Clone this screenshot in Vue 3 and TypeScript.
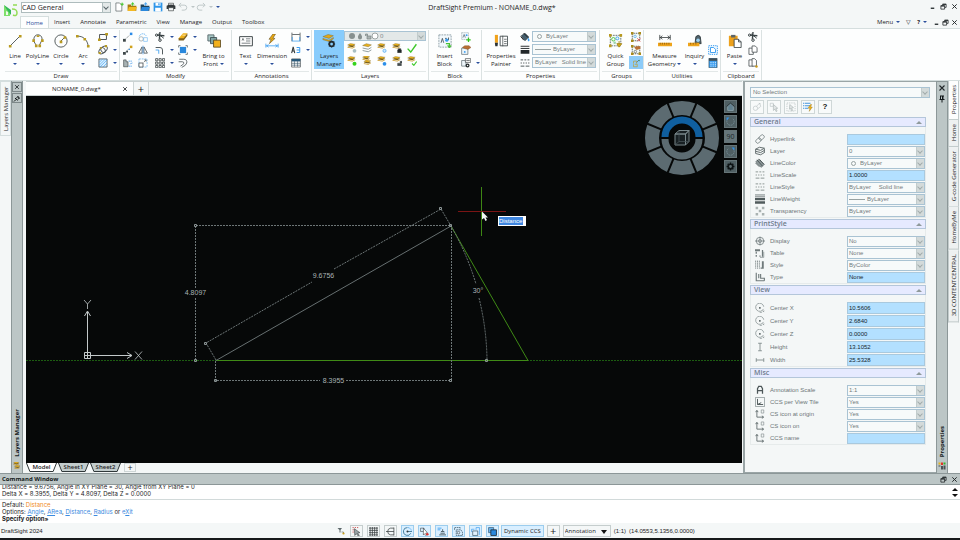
<script setup lang="ts">
import { ref } from 'vue'

interface Tool { icon: string; name: string; menu?: boolean }
interface BigTool { icon: string; label: string }
interface Field { icon: string; label: string; value: string; kind: 'text' | 'select'; mark?: 'ring' | 'line' }
interface Section { title: string; tall?: boolean; fields: Field[] }

const menuTabs = ['Home', 'Insert', 'Annotate', 'Parametric', 'View', 'Manage', 'Output', 'Toolbox']
const activeMenu = ref('Home')

const quick = ['new', 'open', 'openweb', 'save', 'print']

const drawBig: BigTool[] = [
  { icon: 'line', label: 'Line' },
  { icon: 'polyline', label: 'PolyLine' },
  { icon: 'circle', label: 'Circle' },
  { icon: 'arc', label: 'Arc' },
]
const drawSmall: Tool[] = [
  { icon: 'rect', name: 'Rectangle', menu: true },
  { icon: 'ellipse', name: 'Ellipse', menu: true },
  { icon: 'hatch', name: 'Hatch', menu: true },
]
const modifySmall: Tool[] = [
  { icon: 'move', name: 'Move' }, { icon: 'rotate', name: 'Rotate' },
  { icon: 'scissors', name: 'Trim', menu: true }, { icon: 'eraser', name: 'Delete', menu: true },
  { icon: 'copyent', name: 'Copy' }, { icon: 'mirror', name: 'Mirror' },
  { icon: 'fillet', name: 'Fillet', menu: true }, { icon: 'explode', name: 'Explode', menu: true },
  { icon: 'stretch', name: 'Stretch' }, { icon: 'scale', name: 'Scale' },
  { icon: 'pattern', name: 'Pattern', menu: true }, { icon: 'offset', name: 'Offset' },
]
const annoSmall: Tool[] = [
  { icon: 'dimlin', name: 'Linear', menu: true },
  { icon: 'leader', name: 'Leader', menu: true },
  { icon: 'table', name: 'Table' },
]
const layerTools = ['lay-freeze', 'lay-off', 'lay-iso', 'lay-lock', 'check', 'lay-on', 'lay-merge', 'lay-thaw', 'lay-unlock', 'lay-match']
const blockSmall: Tool[] = [
  { icon: 'blk-create', name: 'Create Block' },
  { icon: 'blk-edit', name: 'Edit Block' },
  { icon: 'blk-attr', name: 'Attributes', menu: true },
]

const sections: Section[] = [
  { title: 'General', fields: [
    { icon: 'p-link', label: 'Hyperlink', value: '', kind: 'text' },
    { icon: 'p-layer', label: 'Layer', value: '0', kind: 'select' },
    { icon: 'p-color', label: 'LineColor', value: 'ByLayer', kind: 'select', mark: 'ring' },
    { icon: 'p-dashes', label: 'LineScale', value: '1.0000', kind: 'text' },
    { icon: 'p-dashes', label: 'LineStyle', value: 'ByLayer\u2003 Solid line', kind: 'select' },
    { icon: 'p-weight', label: 'LineWeight', value: 'ByLayer', kind: 'select', mark: 'line' },
    { icon: 'p-checker', label: 'Transparency', value: 'ByLayer', kind: 'select' },
  ] },
  { title: 'PrintStyle', fields: [
    { icon: 'p-target', label: 'Display', value: 'No', kind: 'select' },
    { icon: 'p-table', label: 'Table', value: 'None', kind: 'select' },
    { icon: 'p-style', label: 'Style', value: 'ByColor', kind: 'select' },
    { icon: 'p-type', label: 'Type', value: 'None', kind: 'text' },
  ] },
  { title: 'View', tall: true, fields: [
    { icon: 'p-center', label: 'Center X', value: '10.5606', kind: 'text' },
    { icon: 'p-center', label: 'Center Y', value: '2.6840', kind: 'text' },
    { icon: 'p-center', label: 'Center Z', value: '0.0000', kind: 'text' },
    { icon: 'p-height', label: 'Height', value: '13.1052', kind: 'text' },
    { icon: 'p-width', label: 'Width', value: '25.5328', kind: 'text' },
  ] },
  { title: 'Misc', fields: [
    { icon: 'p-a', label: 'Annotation Scale', value: '1:1', kind: 'select' },
    { icon: 'p-ccsview', label: 'CCS per View Tile', value: 'Yes', kind: 'select' },
    { icon: 'p-ccs', label: 'CS icon at origin', value: 'Yes', kind: 'select' },
    { icon: 'p-ccs', label: 'CS icon on', value: 'Yes', kind: 'select' },
    { icon: 'p-ccs', label: 'CCS name', value: '', kind: 'text' },
  ] },
]

const dockTabs = ['Properties', 'Home', 'G-code Generator', 'HomeByMe', '3D CONTENTCENTRAL']
const sheets = ['Model', 'Sheet1', 'Sheet2']
const activeSheet = ref('Model')
const toggles = ref([
  { icon: 's-snap', name: 'Snap', on: false }, { icon: 's-grid', name: 'Grid', on: false },
  { icon: 's-ortho', name: 'Ortho', on: false }, { icon: 's-polar', name: 'Polar', on: true },
  { icon: 's-esnap', name: 'ESnap', on: true }, { icon: 's-etrack', name: 'ETrack', on: true },
  { icon: 's-lw', name: 'LineWeight', on: true }, { icon: 's-quick', name: 'QuickInput', on: true },
  { icon: 's-cycle', name: 'Entity Cycling', on: true },
])
const spokes = [22.5, 67.5, 112.5, 157.5, 202.5, 247.5, 292.5, 337.5]
const entry = ref('Distance')
</script>

<template>
  <div class="app">
    <svg class="sprite" aria-hidden="true">
      <defs>
        <symbol id="line" viewBox="0 0 16 16"><path d="M2 14 14 2" stroke="#444b4d" fill="none" /><path d="M1 12.5h3v3H1zM12.5 1h3v3h-3z" fill="#b99a20" /></symbol>
        <symbol id="polyline" viewBox="0 0 16 16"><path d="M3.5 7A4.7 4.7 0 1 1 12 8l-2.5 5M3 8l3 5" stroke="#444b4d" fill="none" /><path d="M1.5 6h3v3h-3zM11.5 6h3v3h-3zM4.5 12h3v3h-3zM8.5 12h3v3h-3zM6.5 1.5h3v2h-3z" fill="#b99a20" /></symbol>
        <symbol id="circle" viewBox="0 0 16 16"><circle cx="8" cy="8" r="7" stroke="#444b4d" fill="none" /><path d="M8 8l4-4" stroke="#444b4d" /><path d="M6.5 7.500h3v3h-3zM11 2.500h3v3h-3z" fill="#b99a20" /></symbol>
        <symbol id="arc" viewBox="0 0 16 16"><path d="M2 2.500C9 2.500 13 7 14 14" stroke="#444b4d" fill="none" /><path d="M0 1h3v3H0zM8.500 4.500h3v3h-3zM12.500 12.500h3v3h-3z" fill="#b99a20" /></symbol>
        <symbol id="rect" viewBox="0 0 16 16"><path d="M2.500 4h11v8h-11z" stroke="#444b4d" stroke-width="1.500" fill="none" /><path d="M0 10.500h4.500v4H0zM11.500 1.500H16v4h-4.500z" fill="#b99a20" /></symbol>
        <symbol id="ellipse" viewBox="0 0 16 16"><g fill="none" stroke="#555c5e" stroke-width="1.500" transform="rotate(-40 8 8)"><ellipse cx="8" cy="8" rx="8" ry="4.500" /><ellipse cx="8" cy="8" rx="3" ry="4.500" /></g><path d="M11 0h3.500v3.500H11zM1 11h3.500v3.500H1zM3 3h3v3H3z" fill="#b99a20" /></symbol>
        <symbol id="hatch" viewBox="0 0 16 16"><path d="M1.500 1.500h13v13h-13z" fill="#d9efff" stroke="#46555e" stroke-width="1.300" /><path d="M2 7 7 2M2 11.500 11.500 2M3 14.500 14.500 3M8 14.500 14.500 8" stroke="#3a9df0" /></symbol>
        <symbol id="move" viewBox="0 0 16 16"><path d="M0 11h4.500v4.500H0z" fill="#3d4648" /><path d="M11 1h4v4h-4z" fill="#2b8be8" /><path d="m4 11 7-6" stroke="#6b7577" stroke-width="1.200" stroke-dasharray="2 1" /></symbol>
        <symbol id="rotate" viewBox="0 0 16 16"><path d="M2 7a6 6 0 0 1 11-1" fill="none" stroke="#4ba5ef" stroke-width="1.300" stroke-dasharray="2 1" /><circle cx="5" cy="11" r="3.500" fill="none" stroke="#8a9395" /><path d="M9 9h6v6H9z" fill="none" stroke="#6fb7f2" /></symbol>
        <symbol id="scissors" viewBox="0 0 16 16"><path d="M8 0 7 11M15 6 3 5" stroke="#3a4345" stroke-width="2.200" /><circle cx="8" cy="13" r="2" fill="none" stroke="#3a4345" stroke-width="1.600" /><circle cx="2.500" cy="5" r="1.800" fill="none" stroke="#3a4345" stroke-width="1.600" /><path d="m5 3 9 7" stroke="#3a4345" stroke-width="1.500" /></symbol>
        <symbol id="eraser" viewBox="0 0 16 16"><path d="M1 10 8 2h7l-6 9H1z" fill="#eeb018" /><path d="M1 10h8v3.500H1zM9 13.500V10l6-8v4z" fill="#80601c" /><path d="M7 5h5" stroke="#fff" /></symbol>
        <symbol id="copyent" viewBox="0 0 16 16"><path d="M0 11h4.500v4.500H0zM5 9h3v3H5z" fill="#3d4648" /><path d="M11 1h4v4h-4z" fill="#d0a21b" /><path d="m4 11 7-6" stroke="#6b7577" stroke-width="1.200" stroke-dasharray="2 1" /><path d="M9 6h2v2H9z" fill="#2b8be8" /></symbol>
        <symbol id="mirror" viewBox="0 0 16 16"><path d="M6.500 3v10H1zM9.500 3v10H15z" fill="none" stroke="#4a5355" stroke-width="1.300" /><path d="M8 1v14" stroke="#2b8be8" /></symbol>
        <symbol id="fillet" viewBox="0 0 16 16"><path d="M1 4h7q4 0 4 4v7" fill="none" stroke="#4a5355" stroke-width="1.500" /><path d="M1 8h5v6" fill="none" stroke="#4ba5ef" stroke-width="1.500" /></symbol>
        <symbol id="explode" viewBox="0 0 16 16"><path d="M3 3h10v10H3z" fill="#2a88dc" /><path d="M1 4V1h3M12 1h3v3M15 12v3h-3M4 15H1v-3" fill="none" stroke="#5a6466" stroke-width="1.300" /></symbol>
        <symbol id="stretch" viewBox="0 0 16 16"><path d="M1 3h4v3h3v8H1z" fill="#a8b2b4" stroke="#3d4648" /><path d="M9 5h6M9 13h6M15 8l-4 1.500" stroke="#2b8be8" stroke-width="1.300" stroke-dasharray="2 1" /></symbol>
        <symbol id="scale" viewBox="0 0 16 16"><path d="M1.500 1.500h13v13h-13z" fill="none" stroke="#4ba5ef" stroke-dasharray="3 1.500" /><path d="M1.500 8h6.500v6.500H1.500z" fill="#fff" stroke="#4a5355" stroke-width="1.300" /><path d="m9 7 4-4M10 3h3v3" fill="none" stroke="#4a5355" /></symbol>
        <symbol id="pattern" viewBox="0 0 16 16"><g fill="none" stroke="#3d4648" stroke-width="1.300"><path d="M1 1h3.500v3.500H1zM6.500 1H10v3.500H6.500zM12 1h3.500v3.500H12zM1 6.500h3.500V10H1zM6.500 6.500H10V10H6.500zM12 6.500h3.500V10H12zM1 12h3.500v3.500H1zM6.500 12H10v3.500H6.500zM12 12h3.500v3.500H12z" /></g></symbol>
        <symbol id="offset" viewBox="0 0 16 16"><path d="M2 2h7q6 0 5 6-1 4-8 7M1 6h6q3 0 2 3-1 2-5 4" fill="none" stroke="#4a5355" stroke-width="1.300" /></symbol>
        <symbol id="front" viewBox="0 0 16 16"><path d="M1 1h7v7H1z" fill="#a9c9c7" stroke="#526468" /><path d="M4 4h7v7H4z" fill="#7fa3a4" stroke="#3f5054" /><path d="M7.500 7h8v8h-8z" fill="#f2b01c" stroke="#5a4a20" /></symbol>
        <symbol id="textnote" viewBox="0 0 16 16"><path d="M.7 3h14.600v10.500H.7z" fill="#fff" stroke="#3d4648" stroke-width="1.100" /><path d="M3.500 7.500 4.500 5l1 2.500M8 5.500h5M8 8h5M3 10.500h10" stroke="#5a6466" fill="none" stroke-width=".9" /></symbol>
        <symbol id="dimension" viewBox="0 0 16 16"><path d="M9 0 4.500 6H7l-2 5 6.500-6H9l3-5z" fill="#e7a715" stroke="#5d4a1c" stroke-width=".6" /><path d="M1 11v4.500M15 11v4.500M1 13.500h14M4 12l-2 1.500L4 15M12 12l2 1.500-2 1.500" stroke="#3a9df0" fill="none" stroke-width=".9" /></symbol>
        <symbol id="dimlin" viewBox="0 0 16 16"><path d="M1.500 1v14M14.500 1v14M2 4h12" stroke="#3d4648" stroke-width="1.200" /><path d="M2 8v6.500h12V8" fill="none" stroke="#3a9df0" stroke-width="1.200" /></symbol>
        <symbol id="leader" viewBox="0 0 16 16"><path d="M1 13 3.500 3 6 13M2 9.500h3" fill="none" stroke="#33393b" stroke-width="1.700" /><path d="M9 4h5v8H9M9 8h5" fill="none" stroke="#3a9df0" stroke-width="1.600" /></symbol>
        <symbol id="table" viewBox="0 0 16 16"><path d="M1 1.500h14v13H1z" fill="#fff" stroke="#33393b" /><path d="M1 1.500h14v4H1z" fill="#27587a" /><path d="M1 8.500h14M1 11.500h14M5.500 5v9M10.500 5v9" stroke="#3d5a6c" /></symbol>
        <symbol id="stack" viewBox="0 0 16 16"><path d="m1 8 5-2.500L15 7l-5 3z" fill="#7b611c" /><path d="m1 6 5-3 9 1.500L10 7.500z" fill="#e9b21f" stroke="#6a5418" stroke-width=".5" /><path d="m1 9.500 9 1.500 5-3v1.500l-5 3L1 11z" fill="#c8941a" /></symbol>
        <symbol id="layermgr" viewBox="0 0 16 16"><path d="m1 3 6-2.500 6 1.500-5 3zM1 5l7 2 5-3v1.500L8 8.500 1 6.500z" fill="#e0a81c" stroke="#6a5418" stroke-width=".4" /><circle cx="11" cy="11.500" r="2.700" fill="none" stroke="#222a2e" stroke-width="1.900" /><path d="M11 7.500v8M7 11.500h8M8.200 8.700l5.600 5.600M13.800 8.700l-5.600 5.600" stroke="#222a2e" /><circle cx="11" cy="11.500" r="1.500" fill="#88ccfc" /></symbol>
        <symbol id="lay-freeze" viewBox="0 0 16 16"><use href="#stack" y="-2" width="14" height="14" /><circle cx="12" cy="12.500" r="3" fill="#a9bfc4" /></symbol>
        <symbol id="lay-off" viewBox="0 0 16 16"><path d="m1 4 6-3 8 2-5 3z" fill="#e9b21f" stroke="#6a5418" stroke-width=".6" /><path d="m1 8 9 2 5-3M1 12l9 2 5-3" fill="none" stroke="#8c9a9c" stroke-width="1.500" /></symbol>
        <symbol id="lay-iso" viewBox="0 0 16 16"><use href="#stack" y="-2" width="14" height="14" /><circle cx="12" cy="12.500" r="2.500" fill="#cfeaff" stroke="#3a9df0" /></symbol>
        <symbol id="lay-lock" viewBox="0 0 16 16"><use href="#stack" y="-2" width="14" height="14" /><path d="M9 11h6v4.500H9zM10 11V9h4v2" fill="#22282a" stroke="#22282a" stroke-width=".7" /></symbol>
        <symbol id="check" viewBox="0 0 16 16"><path d="m1 9 5 5.500L15 2" fill="none" stroke="#3cc828" stroke-width="2.200" /></symbol>
        <symbol id="lay-on" viewBox="0 0 16 16"><use href="#stack" y="-2" width="14" height="14" /><circle cx="12" cy="12.500" r="3.200" fill="#35d31c" /></symbol>
        <symbol id="lay-merge" viewBox="0 0 16 16"><use href="#stack" y="-3" width="13" height="13" /><use href="#stack" x="2" y="4" width="13" height="13" /></symbol>
        <symbol id="lay-thaw" viewBox="0 0 16 16"><use href="#stack" y="-2" width="14" height="14" /><circle cx="12" cy="12.500" r="3" fill="#2c8fe9" /></symbol>
        <symbol id="lay-unlock" viewBox="0 0 16 16"><use href="#stack" y="-2" width="14" height="14" /><path d="M9 11.500h6v4H9zM13 11V8.500h3V11" fill="#444c4e" stroke="#33393b" stroke-width=".7" /></symbol>
        <symbol id="lay-match" viewBox="0 0 16 16"><use href="#stack" y="-2" width="14" height="14" /><path d="m8 12 3 3 4.500-6" fill="none" stroke="#3cc828" stroke-width="1.700" /></symbol>
        <symbol id="insblock" viewBox="0 0 16 16"><path d="M1 1h14v14H1z" fill="#f2f8fc" stroke="#8798a0" stroke-dasharray="2 1" /><path d="M3.500 10 5 5l1.500 5M8 5h2M12 4v3" stroke="#44525a" fill="none" /><circle cx="10" cy="7" r="1.800" fill="#3a9df0" /><path d="M9 11h4v4M11 13l2 2.500 2-2.500" fill="none" stroke="#49c234" stroke-width="1.400" /></symbol>
        <symbol id="blk-create" viewBox="0 0 16 16"><path d="M1 1h11v11H1z" fill="#eef6fb" stroke="#93a3a9" stroke-dasharray="2 1" /><path d="m3 9 2-5 2 5" stroke="#44525a" fill="none" /><circle cx="9" cy="5" r="1.500" fill="#3a9df0" /><path d="M12 9v7M8.500 12.500h7" stroke="#35c31c" stroke-width="2" /></symbol>
        <symbol id="blk-edit" viewBox="0 0 16 16"><path d="M1 5h10v10H1z" fill="#eef6fb" stroke="#4c5a60" /><path d="m2 4 4-3h7l3 3-5 3-4-1z" fill="#b96f35" stroke="#6a3b18" stroke-width=".5" /><circle cx="6" cy="11" r="1.500" fill="#3a9df0" /></symbol>
        <symbol id="blk-attr" viewBox="0 0 16 16"><path d="M1 4h7v9H1z" fill="#eef6fb" stroke="#4c5a60" /><path d="M7 1h8.500v6H7z" fill="#fff" stroke="#33393b" /><path d="M8.500 4h5.500" stroke="#33393b" /><circle cx="10.500" cy="12" r="2.200" fill="none" stroke="#22282a" stroke-width="2" /></symbol>
        <symbol id="painter" viewBox="0 0 16 16"><path d="M1 1h3.500v9H1z" fill="#f0a21a" /><path d="M1 10h3.500l-.5 4H1.500z" fill="#2c3436" /><path d="M7 2.500h8.500v11H7z" fill="#fff" stroke="#3d4648" /><path d="M10 2v12M11.500 6h3M11.500 8.500h3M11.500 11h3" stroke="#3d4648" stroke-width=".8" /></symbol>
        <symbol id="bucket" viewBox="0 0 16 16"><path d="m2 6 6-4 6 6-6 6z" fill="#455f6e" stroke="#2b3538" /><path d="M1 7l5 6M6 2l7 7" stroke="#1c2224" stroke-width="1.600" /><path d="M13 9q4 4 1 6-3-1-1-6" fill="#3a9df0" /></symbol>
        <symbol id="weights" viewBox="0 0 16 16"><path d="M1 2h14M1 5.500h14" stroke="#22282a" stroke-width="1.500" /><path d="M1 8h14v6H1z" fill="#22282a" /></symbol>
        <symbol id="styles" viewBox="0 0 16 16"><path d="M1 3h4m2 0h3m2 0h3M1 8h2m2 0h2m2 0h2m2 0h2M1 13h6m2 0h6" stroke="#3d4648" stroke-width="1.400" /></symbol>
        <symbol id="group" viewBox="0 0 16 16"><path d="M1.500 1.500h12v12h-12z" fill="#f4faf6" stroke="#5a6466" stroke-dasharray="2 1" /><path d="M0 0h3v3H0zM12 0h3v3h-3zM0 12h3v3H0z" fill="#b99a20" /><circle cx="5" cy="6" r="2" fill="none" stroke="#49c234" /><circle cx="9.500" cy="5" r="1.700" fill="none" stroke="#3a9df0" /><circle cx="6.500" cy="10" r="1.500" fill="#9bd4ae" /><path d="M11.500 8v5M9 11l2.500 4 3-4z" fill="#ecc11c" stroke="#a58415" /></symbol>
        <symbol id="ungroup" viewBox="0 0 16 16"><path d="M2 2h12v12H2z" fill="#f4faf6" stroke="#33393b" stroke-width="1.200" stroke-dasharray="2 1" /><path d="M0 0h4v4H0zM12 0h4v4h-4zM0 12h4v4H0z" fill="#a98b1c" /><circle cx="6.500" cy="7" r="2" fill="none" stroke="#3a9df0" /><path d="m10 10 5 5m0-5-5 5" stroke="#e04a4a" stroke-width="1.300" /></symbol>
        <symbol id="editgroup" viewBox="0 0 16 16"><path d="M2 2h12v12H2z" fill="#f4faf6" stroke="#33393b" stroke-width="1.200" stroke-dasharray="2 1" /><path d="M0 0h4v4H0zM12 12h4v4h-4zM0 12h4v4H0z" fill="#a98b1c" /><path d="m5 4 4-2h6v4l-6 2z" fill="#b96f35" /><circle cx="7" cy="10.500" r="2" fill="none" stroke="#4a5355" /></symbol>
        <symbol id="selgroup" viewBox="0 0 16 16"><path d="M4 9V5h5v4M6 10h4v4H4v-4" fill="none" stroke="#b7a44b" stroke-width="1.300" /><path d="M9 7l4-4" stroke="#62777f" stroke-width="1.300" /><circle cx="13" cy="4" r="1" fill="#3d8a35" /></symbol>
        <symbol id="measure" viewBox="0 0 16 16"><path d="M2 1v6M14 1v6M2 4h12M5 2 2.500 4 5 6M11 2l2.500 2L11 6" stroke="#33393b" fill="none" stroke-width=".9" /><path d="M0 10h16v4H0z" fill="#eea41b" /><path d="M2.500 10v2M5 10v2M7.500 10v2M10 10v2M12.500 10v2" stroke="#7d4e0a" stroke-width=".8" /></symbol>
        <symbol id="inquiry" viewBox="0 0 16 16"><path d="M9 3q3-3 5 0l1 8H8z" fill="#52656d" stroke="#2d373a" /><circle cx="11.500" cy="7" r="2" fill="#9bd0f0" /><path d="M0 10h13v4H0z" fill="#eea41b" /><path d="M3 10v2M6 10v2M9 10v2" stroke="#7d4e0a" stroke-width=".8" /></symbol>
        <symbol id="clipping" viewBox="0 0 16 16"><path d="M1 1h14v14H1z" fill="#edf7ff" stroke="#3a9df0" stroke-width="1.500" stroke-dasharray="2 1.500" /><path d="M4 12V4h5l3 3v5z" fill="#fff" stroke="#3a9df0" stroke-width="1.500" /></symbol>
        <symbol id="calc" viewBox="0 0 16 16"><path d="M1.500.5h13v15h-13z" fill="#3a9df0" stroke="#33505f" /><path d="M1.500.5h13v4h-13z" fill="#3f4d54" /><path d="M4 7h1.500M7.500 7H9M11 7h1.500M4 10h1.500M7.500 10H9M11 10h1.500M4 13h1.500M7.500 13H9M11 13h1.500" stroke="#fff" stroke-width="1.500" /></symbol>
        <symbol id="paste" viewBox="0 0 16 16"><path d="M1 2h10v12H1z" fill="#eda11c" /><path d="M3.500 1h5v3h-5z" fill="#5b6568" /><path d="M7 6h5l3 3v6.500H7z" fill="#fff" stroke="#3d4648" /><path d="M12 6v3h3" fill="none" stroke="#3d4648" /></symbol>
        <symbol id="copy" viewBox="0 0 16 16"><path d="M1.500 5h5l2 2v8h-7z" fill="#fff" stroke="#3d4648" stroke-width="1.200" /><path d="M6.500 1.500h5l3 3v7h-8z" fill="#fff" stroke="#3d4648" stroke-width="1.200" /></symbol>
        <symbol id="copyref" viewBox="0 0 16 16"><path d="M1.500 3h5l2 2v8h-7z" fill="#fff" stroke="#3d4648" stroke-width="1.200" /><path d="M6.500 1h4l3 3v9h-7z" fill="#fff" stroke="#3d4648" stroke-width="1.200" /><circle cx="13.500" cy="13.500" r="2" fill="#c9991b" /></symbol>
        <symbol id="new" viewBox="0 0 16 16"><path d="M3 1.500h6l3.500 3.500v9.500H3z" fill="#fff" stroke="#4a5355" /><path d="M13 1v5M10.500 3.500h5" stroke="#35c31c" stroke-width="1.500" /></symbol>
        <symbol id="open" viewBox="0 0 16 16"><path d="M1 4h5l1 2h8v8H1z" fill="#a87b13" /><path d="M3 8h13l-3 6.500H1z" fill="#f4b922" /><path d="M9 6V2M7 4l2-3 2 3" fill="none" stroke="#35c31c" stroke-width="1.500" /></symbol>
        <symbol id="openweb" viewBox="0 0 16 16"><path d="M1 4h5l1 2h8v8H1z" fill="#20445c" /><path d="M3 8h13l-3 6.500H1z" fill="#2a88dc" /><path d="M9 6V2M7 4l2-3 2 3" fill="none" stroke="#3a9df0" stroke-width="1.500" /></symbol>
        <symbol id="save" viewBox="0 0 16 16"><path d="M1 1h14v14H1z" fill="#2f97ea" /><path d="M4 1h8v5H4zM3.500 9h9v6h-9z" fill="#fff" /><path d="M8.500 2h2v3h-2z" fill="#2f97ea" /></symbol>
        <symbol id="print" viewBox="0 0 16 16"><path d="M4 2h8v4H4z" fill="#fff" stroke="#33393b" /><path d="M1 6q7-4 14 0v5H1z" fill="#33393b" /><path d="M4 9h8v5H4z" fill="#f3f6f6" stroke="#33393b" /></symbol>
        <symbol id="undo" viewBox="0 0 16 16"><path d="M2 5h8q4 0 4 4t-4 4H6M5 1.500 1.500 5 5 8.500" fill="none" stroke="#bcc5c6" stroke-width="1.500" /></symbol>
        <symbol id="redo" viewBox="0 0 16 16"><path d="M14 5H6Q2 5 2 9t4 4h4M11 1.500 14.500 5 11 8.500" fill="none" stroke="#bcc5c6" stroke-width="1.500" /></symbol>
        <symbol id="x" viewBox="0 0 16 16"><path d="m3 3 10 10M13 3 3 13" stroke="#22282a" stroke-width="2.200" /></symbol>
        <symbol id="restore" viewBox="0 0 16 16"><path d="M6 6V3h8v7h-3M2 6h8.500v8H2z" fill="none" stroke="#22282a" stroke-width="1.800" /><path d="M6 3h8M2 7h8.500" stroke="#22282a" stroke-width="2.500" /></symbol>
        <symbol id="min" viewBox="0 0 16 16"><path d="M4 12h8" stroke="#22282a" stroke-width="3" /></symbol>
        <symbol id="pin" viewBox="0 0 16 16"><path d="M4 2h8M5 2v6M9.500 2v6M3 9h10M8 9v6" stroke="#111718" stroke-width="2" /><path d="M8 2h2.500v6H8z" fill="#111718" /></symbol>
        <symbol id="pinout" viewBox="0 0 16 16"><path d="M2 14 6 10M4 7l5 5M6 8l4-4M9 10l4-3M9 3l4 5" stroke="#111718" stroke-width="2" /></symbol>
        <symbol id="sel1" viewBox="0 0 16 16"><g fill="none" stroke="#b9c1c2"><circle cx="5.500" cy="10" r="3.500" /><path d="m7 7 5-5 2 5-5 4M11 2l3 1" /></g></symbol>
        <symbol id="sel2" viewBox="0 0 16 16"><path d="M2 2h5v5H2z" fill="none" stroke="#b9c1c2" /><path d="m7 4 7 6-3 .5 2 4-1.500 1-2-4-2.500 2z" fill="#e2e6e6" stroke="#aab3b4" /></symbol>
        <symbol id="sel3" viewBox="0 0 16 16"><path d="M1.500 1.500h13v13h-13z" fill="none" stroke="#aab3b4" stroke-dasharray="2 1.500" /><path d="m6 4 6 5-3 .5 1.500 4-2 .5-1-4-2 1.500z" fill="#e2e6e6" stroke="#aab3b4" /></symbol>
        <symbol id="sel4" viewBox="0 0 16 16"><path d="M0 2h2m1 0h9M0 6h2m1 0h9M0 10h2m1 0h5" stroke="#2a88dc" stroke-width="1.400" /><path d="m12 4-4 6h3l-1 5 5-7h-3l2-4z" fill="#f0b31b" stroke="#7c5c10" stroke-width=".5" /></symbol>
        <symbol id="p-link" viewBox="0 0 16 16"><g fill="none" stroke="#7e898a" stroke-width="1.400" transform="rotate(-45 8 8)"><rect x="0" y="5" width="9" height="6" rx="2" /><rect x="7" y="5" width="9" height="6" rx="2" /></g></symbol>
        <symbol id="p-layer" viewBox="0 0 16 16"><path d="m1 5 6-3 8 1.500L9 7zM1 8.500l8 2L15 7M1 12l8 2 6-3.500M1 5v7M15 4v7" fill="none" stroke="#5e696a" stroke-width="1.500" /></symbol>
        <symbol id="p-color" viewBox="0 0 16 16"><path d="m1 6 5-4 9 8-5 5z" fill="#8f9a9b" stroke="#5e696a" /><path d="m3 3 9 10M7 2l7 8M1 8l6 6" stroke="#4c5658" stroke-width="1.600" /></symbol>
        <symbol id="p-dashes" viewBox="0 0 16 16"><path d="M1 3h4m2 0h3m2 0h3M1 8h2m2 0h2m2 0h2m2 0h2M1 13h6m2 0h6" stroke="#87918f" stroke-width="1.500" /></symbol>
        <symbol id="p-weight" viewBox="0 0 16 16"><path d="M0 1.500h16M0 4.500h16" stroke="#5e696a" stroke-width="1.300" /><path d="M0 6.500h16V10H0zM0 11.500h16v4H0z" fill="#505b5c" /></symbol>
        <symbol id="p-checker" viewBox="0 0 16 16"><path d="M1 1h4v4H1zM11 1h4v4h-4zM6 6h4v4H6zM1 11h4v4H1zM11 11h4v4h-4z" fill="#aab3b2" /></symbol>
        <symbol id="p-target" viewBox="0 0 16 16"><path d="M0 8h16M8 1v14" stroke="#6f7a7b" stroke-width="1.200" /><circle cx="8" cy="8" r="6" fill="none" stroke="#6f7a7b" stroke-width="1.300" /><circle cx="8" cy="8" r="2.500" fill="none" stroke="#6f7a7b" /></symbol>
        <symbol id="p-table" viewBox="0 0 16 16"><path d="M0 2h8v3H0zM1 6h2v3H1zM1 11h2v3H1zM11 3h2v11h-2zM7 12h2v2H7z" fill="#6f7a7b" /><path d="M14 6v9H8" fill="none" stroke="#6f7a7b" /></symbol>
        <symbol id="p-style" viewBox="0 0 16 16"><path d="M1 1v13M4 1v13M7 1v13" stroke="#6f7a7b" stroke-width="1.400" stroke-dasharray="2 1" /><path d="M11 2h3v12H9v-2h2z" fill="#6f7a7b" /></symbol>
        <symbol id="p-type" viewBox="0 0 16 16"><path d="M2 1v13h13M6 3v7M9 3v7h6v4" stroke="#6f7a7b" fill="none" stroke-width="1.800" /></symbol>
        <symbol id="p-center" viewBox="0 0 16 16"><path d="M13.500 9.500A6.500 6.500 0 1 1 14 6M7.500 15H11" fill="none" stroke="#7e898a" stroke-width="1.100" /><path d="M6.500 6.500h2.500v2.500H6.500z" fill="#5e696a" /><path d="m12.500 12 2 2.500m0-2.500-2 2.500" stroke="#7e898a" /></symbol>
        <symbol id="p-height" viewBox="0 0 16 16"><path d="M5 2h6M5 14h6M8 2v12" stroke="#7e898a" stroke-width="1.400" /></symbol>
        <symbol id="p-width" viewBox="0 0 16 16"><path d="M2 5v6M14 5v6M2 8h12" stroke="#7e898a" stroke-width="1.400" /></symbol>
        <symbol id="p-a" viewBox="0 0 16 16"><path d="M4 14V6l2-4h4l2 4v8M4 9h8" fill="none" stroke="#4c5658" stroke-width="2" /></symbol>
        <symbol id="p-ccs" viewBox="0 0 16 16"><path d="M3 3v10h10M1 5l2-3 2 3M11 11l3 2-3 2" fill="none" stroke="#5e696a" stroke-width="1.400" /><path d="M10 1.500h4v5h-4z" fill="none" stroke="#7e898a" /></symbol>
        <symbol id="p-ccsview" viewBox="0 0 16 16"><path d="M.7.700h14.600v14.600H.7z" fill="none" stroke="#6f7a7b" /><path d="M4 3v9l6-3M4 12h9" fill="none" stroke="#4c5658" stroke-width="1.500" /></symbol>
        <symbol id="s-snap" viewBox="0 0 16 16"><path d="M1 1h2M1 5h2M5 1h2M9 1h2M1 9h2" stroke="#c83232" stroke-width="1.500" /><path d="m4 3 10 7-4 1 3 4-2 1-3-4-3 3z" fill="#9aa4a6" stroke="#33393b" /></symbol>
        <symbol id="s-grid" viewBox="0 0 16 16"><path d="M2 0v16M6 0v16M10 0v16M14 0v16M0 2h16M0 6h16M0 10h16M0 14h16" stroke="#33393b" stroke-width="1.300" /></symbol>
        <symbol id="s-ortho" viewBox="0 0 16 16"><path d="M14 2H8Q3 3 3 8t5 6h6M0 8h14M14 1v14" fill="none" stroke="#33393b" stroke-width="1.300" /></symbol>
        <symbol id="s-polar" viewBox="0 0 16 16"><path d="M8 1a7 7 0 1 0 6 10M8 8h8" fill="none" stroke="#33708f" stroke-width="1.500" /><path d="M9 1a7 7 0 0 1 6 6" fill="none" stroke="#3a9df0" stroke-width="1.500" stroke-dasharray="2 1" /><circle cx="8" cy="8" r="1.800" fill="#33393b" /></symbol>
        <symbol id="s-esnap" viewBox="0 0 16 16"><path d="M1 2h6v6H1z" fill="none" stroke="#33393b" /><path d="m6 2 7 8-3 1 2 3-2 1-2-3-2 2z" fill="#fff" stroke="#33393b" /><circle cx="13" cy="13" r="2.300" fill="#d33" /></symbol>
        <symbol id="s-etrack" viewBox="0 0 16 16"><path d="M1 2h7M1 5h5" stroke="#3a9df0" stroke-width="1.500" /><path d="M7 8h6M6 11h8M4 14h12M10 4v3" stroke="#4a5e68" stroke-width="1.700" /></symbol>
        <symbol id="s-lw" viewBox="0 0 16 16"><path d="M1 5V1h10v3M4 5h8l3 4v6H4z" fill="none" stroke="#33505f" stroke-width="1.300" stroke-dasharray="3 1" /><circle cx="8" cy="10" r="2.300" fill="none" stroke="#33393b" /></symbol>
        <symbol id="s-quick" viewBox="0 0 16 16"><path d="M3 7h9v8H3z" fill="#e0f2ff" stroke="#33505f" stroke-width="1.200" /><path d="M9 5V1h6v13M1 9V4h5" fill="none" stroke="#3a9df0" stroke-width="1.200" /></symbol>
        <symbol id="s-cycle" viewBox="0 0 16 16"><path d="M1 1h9v9H1z" fill="#6cb8f2" stroke="#1c3a50" /><path d="M5 5h10v10H5z" fill="#2a88dc" stroke="#1c2c38" stroke-width="1.500" /></symbol>
        <symbol id="filter" viewBox="0 0 16 16"><path d="M1 2h9L7 6v5H5V6z" fill="#5d686b" /><path d="M9 10h4v4" fill="none" stroke="#33393b" /><circle cx="13" cy="13" r="2.200" fill="#c9a01b" /></symbol>
        <symbol id="home" viewBox="0 0 16 16"><path d="M3 15V8l5-5 5 5v7z" fill="#61808f" stroke="#a6bcc3" /><path d="m1 8 7-6 7 6" fill="none" stroke="#1e2a2e" stroke-width="1.500" /></symbol>
        <symbol id="turn" viewBox="0 0 16 16"><path d="M4 3a6.500 6.500 0 1 0 8 0" fill="none" stroke="#7a929c" stroke-width="1.400" stroke-dasharray="3 1" /><path d="M1 6V1h5z" fill="#2c8fe9" /></symbol>
        <symbol id="gear" viewBox="0 0 16 16"><path d="M8 1v14M1 8h14M3 3l10 10M13 3 3 13" stroke="#0d1314" stroke-width="2.500" /><circle cx="8" cy="8" r="4" fill="#5d6c70" stroke="#0d1314" stroke-width="3" /></symbol>
        <symbol id="palette" viewBox="0 0 16 16"><path d="M1 1h4v4H1z" fill="#e8b51d" /><path d="M6 1h4v5H6z" fill="#e0322c" /><path d="M11 1h4v4h-4z" fill="#34b52b" /><path d="M1 7h4v2H1zM6 8h4v7H6zM11 7h4v8h-4z" fill="#4a5355" /></symbol>
      </defs>
    </svg>

    <header class="titlebar">
      <svg class="logo" viewBox="0 0 17 17"><path d="M2 3 8 9v5H2z" fill="#7de06a" /><path d="m2 3 7 5 0 5-4-5z" fill="#34b85a" /><path d="M11 3h4M10 7c4 0 5 1 5 4s-2 3-4 2" fill="none" stroke="#93dc55" stroke-width="1.500" /><path d="m4 9 2 1v3H4z" fill="#effbe9" /></svg>
      <div class="pick workspace"><select aria-label="Workspace"><option>CAD General</option></select></div>
      <button v-for="q in quick" :key="q" class="qbtn" :aria-label="q"><svg><use :href="'#' + q" /></svg></button>
      <button class="qbtn faded" aria-label="Undo"><svg><use href="#undo" /></svg><i class="caret pale"></i></button>
      <button class="qbtn faded" aria-label="Redo"><svg><use href="#redo" /></svg><i class="caret pale"></i></button>
      <button class="qmore" aria-label="Customize"><i class="caret"></i></button>
      <h1>DraftSight Premium - NONAME_0.dwg*</h1>
      <div class="winbtns">
        <button aria-label="Minimize"><svg><use href="#min" /></svg></button>
        <button aria-label="Restore"><svg><use href="#restore" /></svg></button>
        <button aria-label="Close"><svg><use href="#x" /></svg></button>
      </div>
    </header>

    <nav class="menubar">
      <button v-for="t in menuTabs" :key="t" :class="{ active: t === activeMenu }" @click="activeMenu = t">{{ t }}</button>
      <div class="menuright">
        <button>Menu <i class="caret"></i></button>
        <button aria-label="Collapse ribbon">▽</button>
        <button class="help">? <i class="caret"></i></button>
        <div class="winbtns tight">
          <button aria-label="Minimize drawing"><svg><use href="#min" /></svg></button>
          <button aria-label="Restore drawing"><svg><use href="#restore" /></svg></button>
          <button aria-label="Close drawing"><svg><use href="#x" /></svg></button>
        </div>
      </div>
    </nav>

    <section class="ribbon">
      <div class="group">
        <div class="body">
          <div class="bigs">
            <button v-for="b in drawBig" :key="b.icon" class="big"><svg><use :href="'#' + b.icon" /></svg><span>{{ b.label }}</span><i class="caret"></i></button>
          </div>
          <div class="smalls wide">
            <button v-for="s in drawSmall" :key="s.icon" class="small" :aria-label="s.name"><svg><use :href="'#' + s.icon" /></svg><i v-if="s.menu" class="caret"></i></button>
          </div>
        </div>
        <h2>Draw</h2>
      </div>
      <div class="group">
        <div class="body modify">
          <div class="modgrid">
            <button v-for="s in modifySmall" :key="s.icon" class="small" :aria-label="s.name"><svg><use :href="'#' + s.icon" /></svg><i v-if="s.menu" class="caret"></i></button>
          </div>
          <button class="big grow"><svg><use href="#front" /></svg><span>Bring to</span><span>Front <i class="caret"></i></span></button>
        </div>
        <h2>Modify</h2>
      </div>
      <div class="group">
        <div class="body">
          <button class="big w22"><svg><use href="#textnote" /></svg><span>Text</span><i class="caret"></i></button>
          <button class="big w30"><svg><use href="#dimension" /></svg><span>Dimension</span><i class="caret"></i></button>
          <div class="smalls wide">
            <button v-for="s in annoSmall" :key="s.icon" class="small" :aria-label="s.name"><svg><use :href="'#' + s.icon" /></svg><i v-if="s.menu" class="caret"></i></button>
          </div>
        </div>
        <h2>Annotations</h2>
      </div>
      <div class="group">
        <div class="body">
          <button class="big manager"><svg><use href="#layermgr" /></svg><span>Layers</span><span>Manager</span></button>
          <div class="layerside">
            <div class="pick disabled layerpick">
              <svg class="marks" viewBox="0 0 32 8"><circle cx="5" cy="4" r="3" fill="#87908f" /><path d="M13 1q-2.500 3-2 4.500a2 2 0 0 0 4 0Q15.500 4 13 1" fill="#87908f" /><path d="M20 4h4v3h-4zM18.500 4V2h2v2" fill="#aab2b1" stroke="#7b8584" stroke-width=".7" /><circle cx="28" cy="4" r="3" fill="#fff" stroke="#87908f" stroke-width=".8" /></svg>
              <select aria-label="Active layer"><option>0</option></select>
            </div>
            <div class="laygrid">
              <button v-for="l in layerTools" :key="l" :aria-label="l"><svg><use :href="'#' + l" /></svg></button>
            </div>
          </div>
        </div>
        <h2>Layers</h2>
      </div>
      <div class="group">
        <div class="body">
          <button class="big w26"><svg><use href="#insblock" /></svg><span>Insert</span><span>Block</span></button>
          <div class="smalls">
            <button v-for="s in blockSmall" :key="s.icon" class="small" :aria-label="s.name"><svg><use :href="'#' + s.icon" /></svg><i v-if="s.menu" class="caret"></i></button>
          </div>
        </div>
        <h2>Block</h2>
      </div>
      <div class="group">
        <div class="body">
          <button class="big w34"><svg><use href="#painter" /></svg><span>Properties</span><span>Painter</span></button>
          <div class="smalls icons">
            <button class="small" aria-label="Line color"><svg><use href="#bucket" /></svg></button>
            <button class="small" aria-label="Line weight"><svg><use href="#weights" /></svg></button>
            <button class="small" aria-label="Line style"><svg><use href="#styles" /></svg></button>
          </div>
          <div class="propicks">
            <div class="pick disabled"><i class="ring"></i><select aria-label="Line color"><option>ByLayer</option></select></div>
            <div class="pick disabled"><i class="dash"></i><select aria-label="Line weight"><option>ByLayer</option></select></div>
            <div class="pick disabled"><select aria-label="Line style"><option>ByLayer&ensp; Solid line</option></select></div>
          </div>
        </div>
        <h2>Properties</h2>
      </div>
      <div class="group">
        <div class="body">
          <button class="big w26"><svg><use href="#group" /></svg><span>Quick</span><span>Group</span></button>
          <div class="smalls icons">
            <button class="small" aria-label="Ungroup"><svg><use href="#ungroup" /></svg></button>
            <button class="small" aria-label="Edit group"><svg><use href="#editgroup" /></svg></button>
            <button class="small pressed" aria-label="Group selection"><svg><use href="#selgroup" /></svg></button>
          </div>
        </div>
        <h2>Groups</h2>
      </div>
      <div class="group">
        <div class="body">
          <button class="big w36"><svg><use href="#measure" /></svg><span>Measure</span><span>Geometry <i class="caret"></i></span></button>
          <button class="big w22"><svg><use href="#inquiry" /></svg><span>Inquiry</span><i class="caret"></i></button>
          <div class="smalls icons low">
            <button class="small" aria-label="Clipping"><svg><use href="#clipping" /></svg></button>
            <button class="small" aria-label="Calculator"><svg><use href="#calc" /></svg></button>
          </div>
        </div>
        <h2>Utilities</h2>
      </div>
      <div class="group">
        <div class="body">
          <button class="big w22"><svg><use href="#paste" /></svg><span>Paste</span><i class="caret"></i></button>
          <div class="smalls icons">
            <button class="small" aria-label="Cut"><svg><use href="#scissors" /></svg></button>
            <button class="small" aria-label="Copy"><svg><use href="#copy" /></svg></button>
            <button class="small" aria-label="Copy with reference"><svg><use href="#copyref" /></svg></button>
          </div>
        </div>
        <h2>Clipboard</h2>
      </div>
    </section>

    <main class="work">
      <div class="leftdock"><button class="vtext">Layers Manager</button></div>
      <aside class="rail">
        <button class="boxed" aria-label="Close Layers Manager"><svg><use href="#x" /></svg></button>
        <button class="boxed dark" aria-label="Auto-hide"><svg><use href="#pinout" /></svg></button>
        <strong class="vtext">Layers Manager</strong>
        <svg class="railicon"><use href="#lay-merge" /></svg>
      </aside>

      <section class="document">
        <div class="doctabs">
          <div class="doctab"><span>NONAME_0.dwg*</span><button aria-label="Close tab"><svg><use href="#x" /></svg></button></div>
          <button class="plus" aria-label="New tab">+</button>
        </div>
        <div class="canvas">
          <svg class="drawing">
            <g transform="translate(-26 -96)" fill="none">
              <path d="M26 360.500h716" stroke="#1c5c10" stroke-dasharray="2 1" />
              <path d="M216 360.500h312L451 226" stroke="#3f8a16" />
              <path d="M216 360.500 451 226" stroke="#666f70" />
              <g stroke="#6d7677" stroke-dasharray="2 1">
                <path d="M196 225.500h255.500V380M195.500 226v62M195.500 298v62" />
                <path d="M215.500 361v19.500H320M346 380.500h105" />
                <path d="M216 360 206 343 312 282M334 269l107-60 10 17" />
                <path d="M451 226A271 271 0 0 1 476 284M479 298A271 271 0 0 1 487 360" />
              </g>
              <g stroke="#8b9495"><path d="M194.500 224.500h2v2h-2zM194.500 359.500h2v2h-2zM214.500 379.500h2v2h-2zM449.500 379.500h2v2h-2zM449.500 224.500h2v2h-2zM439.500 207.500h2v2h-2zM204.500 342.500h2v2h-2zM485.500 359.500h2v2h-2z" /></g>
              <g stroke="#c3c9ca"><path d="M84.500 352.500h6v6h-6zM87.500 358V312M84.500 316l3-5 3 5M84 355.500h48M127 352.500l5 3-5 3" /><path d="m84 300 3.500 4 3.500-4M87.500 304v5M135 351.500l7 8M142 351.500l-7 8" stroke-width=".8" /></g>
              <path d="M481.500 187v49" stroke="#3d8614" />
              <path d="M458 211.500h48" stroke="#7a1414" />
              <path d="M482 211.500v8l2-1.500 1.500 3 1.500-1-1.500-2.500h2.500z" fill="#f4f7f7" />
              <g class="dims" fill="#a9b3b4" text-anchor="middle">
                <text x="323.500" y="278">9.6756</text><text x="195.500" y="295">4.8097</text><text x="333.500" y="383">8.3955</text><text x="478" y="293">30°</text>
              </g>
            </g>
          </svg>
          <input v-model="entry" class="entry" aria-label="Command entry" />
          <svg class="wheel" viewBox="-38 -38 76 76">
            <circle r="30" fill="none" stroke="#5c6b71" stroke-width="14" />
            <path v-for="a in spokes" :key="a" d="M0-22V-38" :transform="`rotate(${a})`" stroke="#060808" stroke-width="2" />
            <path d="M-17-1A17 17 0 0 1 17-1" fill="none" stroke="#105f9f" stroke-width="7" />
            <path d="M-17 1A17 17 0 0 0 17 1" fill="none" stroke="#5c6b71" stroke-width="7" />
            <g stroke="#78878b" fill="#182023"><path d="M-7-4H3.500V7H-7zM-7-4l4-3.500H7L3.500-4zM3.500-4 7-7.500v11L3.500 7z" /><path d="M-3-7V3.500H7M-7 7l4-3.500" fill="none" stroke="#4b585b" stroke-width=".7" /></g>
          </svg>
          <div class="viewbtns">
            <button aria-label="Home view"><svg><use href="#home" /></svg></button>
            <button aria-label="Rotate left"><svg><use href="#turn" /></svg></button>
            <button class="deg">90</button>
            <button aria-label="Rotate right"><svg class="flip"><use href="#turn" /></svg></button>
            <button aria-label="View settings"><svg><use href="#gear" /></svg></button>
          </div>
        </div>
        <div class="sheets">
          <button v-for="s in sheets" :key="s" :class="{ current: s === activeSheet }" @click="activeSheet = s">
            <svg viewBox="0 0 32 9" preserveAspectRatio="none"><path d="M.5 0 4 8.500h24L31.500 0" stroke="#30383a" vector-effect="non-scaling-stroke" /></svg><span>{{ s }}</span>
          </button>
          <button class="plus" aria-label="Add sheet">+</button>
        </div>
      </section>

      <section class="props">
        <div class="pick disabled selection"><select aria-label="Selection"><option>No Selection</option></select></div>
        <div class="proptools">
          <button v-for="n in 4" :key="n" :aria-label="'Selection tool ' + n"><svg><use :href="'#sel' + n" /></svg></button>
          <button class="q">?</button>
        </div>
        <section v-for="s in sections" :key="s.title" class="sect" :class="{ tall: s.tall }">
          <h3>{{ s.title }}<i></i></h3>
          <div v-for="f in s.fields" :key="f.label" class="field">
            <svg><use :href="'#' + f.icon" /></svg>
            <label :for="'f-' + f.label">{{ f.label }}</label>
            <input v-if="f.kind === 'text'" :id="'f-' + f.label" :value="f.value" />
            <div v-else class="pick disabled"><i v-if="f.mark === 'ring'" class="ring"></i><i v-if="f.mark === 'line'" class="dash"></i><select :id="'f-' + f.label"><option>{{ f.value }}</option></select></div>
          </div>
        </section>
      </section>
      <aside class="rail right">
        <button aria-label="Close Properties"><svg><use href="#x" /></svg></button>
        <button aria-label="Pin"><svg><use href="#pin" /></svg></button>
        <strong class="vtext">Properties</strong>
        <svg class="railicon"><use href="#palette" /></svg>
      </aside>
      <div class="dock">
        <button v-for="(d, i) in dockTabs" :key="d" class="vtext" :class="{ first: i === 0 }">{{ d }}</button>
      </div>
    </main>

    <section class="command">
      <header><strong>Command Window</strong>
        <button aria-label="Float"><svg><use href="#restore" /></svg></button><button aria-label="Close command window"><svg><use href="#x" /></svg></button>
      </header>
      <div class="history">
        <div class="log"><p>Distance = 9.6756, Angle in XY Plane = 30, Angle from XY Plane = 0</p><p>Delta X = 8.3955, Delta Y = 4.8097, Delta Z = 0.0000</p></div>
        <div class="scroll"><i class="up"></i><i class="caret black"></i></div>
      </div>
      <div class="prompt">
        <p>Default: <b class="def">Distance</b></p>
        <p>Options: <a href="#"><u>A</u>ngle</a>, <a href="#"><u>AR</u>ea</a>, <a href="#"><u>D</u>istance</a>, <a href="#"><u>R</u>adius</a> or <a href="#">e<u>X</u>it</a></p>
        <p><strong>Specify option»</strong></p>
      </div>
    </section>

    <footer class="status">
      <span class="product">DraftSight 2024</span>
      <svg class="filter"><use href="#filter" /></svg>
      <div class="toggles">
        <button v-for="t in toggles" :key="t.name" :class="{ on: t.on }" :aria-label="t.name" @click="t.on = !t.on"><svg><use :href="'#' + t.icon" /></svg></button>
      </div>
      <button class="on dyn">Dynamic CCS</button>
      <button class="add" aria-label="Add">+</button>
      <div class="anno"><select aria-label="Annotation"><option>Annotation</option></select></div>
      <span class="coords">(1:1)&ensp;(14.0553,5.1356,0.0000)</span>
    </footer>
  </div>
</template>

<style>
html, body { background: #f4f7f7; }
</style>

<style scoped>
* { box-sizing: border-box; }
.app { min-height: 100vh; display: flex; flex-direction: column; background: #f4f7f7; color: #1d2325; font: 6px/8px "Open Sans", "Noto Sans", sans-serif; border-bottom: 2px solid #16191a; }
.sprite { position: absolute; width: 0; height: 0; }
button { font: inherit; color: inherit; background: none; border: 0; padding: 0; margin: 0; display: flex; align-items: center; justify-content: center; }
select, input { font: inherit; color: inherit; border: 0; background: transparent; padding: 0; margin: 0; min-width: 0; appearance: none; border-radius: 0; outline: 0; }
p, h1, h2, h3 { margin: 0; font-weight: 400; font-size: inherit; }
a { color: #3a8ae0; text-decoration: none; }
.caret { width: 0; height: 0; border: 2px solid transparent; border-top-color: #2a4f9c; border-bottom: 0; display: inline-block; vertical-align: middle; }
.caret.pale { border-top-color: #bcc5c6; }
.caret.black { border-width: 3px 3px 0; border-top-color: #111; }

.pick { display: flex; align-items: center; height: 11px; background: #fff; border: 1px solid #aebcbd; position: relative; padding-left: 2px; }
.pick select { flex: 1; width: 100%; height: 9px; line-height: 9px; }
.pick::after { content: ""; width: 7px; align-self: stretch; background: #e4e9e9; border-left: 1px solid #aebcbd; }
.pick::before { content: ""; position: absolute; right: 2px; top: 2px; width: 3px; height: 3px; border: solid #59656a; border-width: 0 1px 1px 0; transform: rotate(45deg); }
.disabled { background: #f7fafa; border-color: #a9c3d3; color: #727b7d; }
.disabled::after { background: #d3dada; border-color: #c2cccc; }
.disabled::before { border-color: #a2acac; }
.ring { flex: none; width: 5px; height: 5px; border: 1px solid #98a2a2; border-radius: 50%; margin: 0 4px 0 2px; }
.dash { flex: none; width: 16px; height: 1px; background: #98a2a2; margin-right: 2px; }

.titlebar { position: relative; display: flex; align-items: center; height: 16px; padding: 0 2px; }
.logo { width: 17px; height: 17px; margin: 4px 2px 0 0; flex: none; }
.workspace { width: 90px; height: 11px; margin: 0 1px 2px 0; padding-left: 0; font-size: 7px; }
.qbtn { width: 13px; height: 12px; margin-bottom: 2px; }
.qbtn svg { width: 10px; height: 10px; flex: none; }
.qbtn.faded { width: 18px; gap: 3px; }
.qmore { margin: 0 0 2px 3px; }
.titlebar h1 { position: absolute; inset: 0 0 auto; text-align: center; font-size: 7px; line-height: 15px; padding-left: 24px; pointer-events: none; }
.winbtns { display: flex; gap: 4px; margin-left: auto; }
.winbtns svg { width: 7px; height: 7px; }
.titlebar .winbtns { margin-bottom: 4px; }
.winbtns.tight { gap: 2px; margin-left: 0; }

.menubar { display: flex; height: 12px; padding-left: 20px; }
.menubar > button { padding: 0 5px; }
.menubar > button.active { background: #fdfefe; border: 1px solid #d5dede; border-bottom: 0; color: #2c4f9c; }
.menuright { margin-left: auto; display: flex; align-items: center; gap: 6px; padding-right: 2px; }
.menuright button { gap: 3px; }
.help { font-weight: 700; }

.ribbon { display: grid; grid-template-columns: 117px 112px 80px 117px 53px 118px 44px 77px 41px; height: 53px; padding: 1px 0 0 3px; background: #fdfefe; border-top: 1px solid #d5dede; border-bottom: 1px solid #d5dede; }
.group { display: flex; flex-direction: column; border-right: 1px solid #dbe2e2; min-width: 0; }
.group h2 { margin: 0 2px; border-top: 1px solid #e3e8e8; text-align: center; line-height: 8px; }
.body { flex: 1; display: flex; padding: 0 1px 0 2px; }
.modify { padding-right: 4px; }
.bigs { display: grid; grid-template-columns: 20px 25px 22px 22px; }
.big { flex-direction: column; justify-content: flex-start; padding-top: 4px; white-space: nowrap; flex: none; }
.big > svg { width: 14px; height: 14px; margin-bottom: 4px; flex: none; }
.big > .caret { margin-top: 3px; }
.grow { flex: 1; }
.w22 { width: 23px; } .w26 { width: 27px; } .w30 { width: 30px; } .w34 { width: 34px; } .w36 { width: 37px; }
.smalls { display: grid; grid-template-rows: repeat(3, 13px); align-content: start; margin-left: 2px; }
.smalls.wide { margin-left: 3px; }
.smalls.icons { margin-left: 0; }
.small { justify-content: flex-start; gap: 5px; padding-left: 1px; }
.small svg { width: 10px; height: 10px; flex: none; }
.icons .small { width: 14px; padding: 0; justify-content: center; }
.smalls.low { padding-top: 13px; grid-template-rows: repeat(2, 13px); }
.pressed { background: #8ccbf8; }
.modgrid { display: grid; grid-template: repeat(3, 13px) / 15px 17px 23px 23px; align-content: start; }
.manager { width: 30px; background: #88ccfc; margin: 0 0 2px; padding-top: 4px; }
.layerside { flex: 1; margin-top: 1px; }
.layerpick { height: 10px; background: #e3e8e8; margin-right: 1px; }
.marks { width: 32px; height: 8px; flex: none; margin-right: 1px; }
.laygrid { display: grid; grid-template: repeat(2, 13px) / repeat(5, 15px); }
.laygrid svg { width: 10px; height: 10px; }
.propicks { flex: 1; display: flex; flex-direction: column; gap: 2px; padding: 1px 2px 0 0; font-family: "Liberation Sans", sans-serif; }
.propicks select { width: 10px; }

.work { flex: 1; display: flex; min-height: 0; }
.vtext { writing-mode: vertical-rl; transform: rotate(180deg); white-space: nowrap; font-size: 6px; line-height: 8px; }
.leftdock { width: 11px; }
.leftdock .vtext { height: 55px; width: 11px; border: 1px solid #d5dede; }
.rail { width: 12px; background: #bcc6c6; border: solid #8c9798; border-width: 0 1px; display: flex; flex-direction: column; align-items: center; padding: 1px 0; gap: 1px; }
.rail button { width: 10px; height: 10px; }
.rail button svg { width: 6px; height: 6px; }
.rail .boxed { border: 1px solid #7d8889; }
.rail .dark svg { width: 9px; height: 9px; }
.rail .vtext { margin-top: auto; color: #161b1c; }
.railicon { width: 8px; height: 8px; margin: 4px 0 2px; }
.rail.right button svg { width: 8px; height: 8px; }
.document { flex: 1; display: flex; flex-direction: column; min-width: 0; padding-left: 3px; }
.doctabs { display: flex; align-items: stretch; height: 14px; border-top: 1px solid #c9d1d1; }
.doctab { width: 108px; padding-left: 26px; display: flex; align-items: center; background: #fdfefe; border-right: 1px solid #cdd5d5; }
.doctab button { margin: 0 5px 0 auto; }
.doctab svg { width: 6px; height: 6px; }
.plus { width: 15px; font-size: 11px; border-right: 1px solid #cdd5d5; }
.canvas { flex: 1; position: relative; background: #060808; overflow: hidden; min-height: 300px; border-top: 1px solid #c9d1d1; }
.drawing { position: absolute; inset: 0; width: 100%; height: 100%; }
.dims { font: 7px "Liberation Sans", sans-serif; }
.entry { position: absolute; left: 472px; top: 120px; width: 28px; height: 10px; border: 1px solid #fff; border-right-width: 3px; background: #3f86e0; color: #fff; font-family: "Liberation Sans", sans-serif; }
.wheel { position: absolute; top: 4px; right: 22px; width: 76px; height: 76px; }
.viewbtns { position: absolute; top: 4px; right: 5px; display: flex; flex-direction: column; gap: 2px; }
.viewbtns button { width: 13px; height: 13px; background: #4f5f63; border: 1px solid #657477; }
.viewbtns svg { width: 9px; height: 9px; }
.viewbtns .deg { background: #65757a; color: #20282a; font-size: 7px; }
.flip { transform: scaleX(-1); }
.sheets { display: flex; height: 10px; gap: 1px; }
.sheets button { position: relative; width: 31px; height: 9px; }
.sheets button svg { position: absolute; inset: 0; width: 100%; height: 9px; fill: #c2cccc; }
.sheets .current svg { fill: #fff; }
.sheets span { position: relative; font-weight: 600; line-height: 9px; }
.sheets .plus { width: 12px; margin-left: 2px; border: 1px solid #cdd5d5; font-size: 9px; }

.props { width: 193px; border: 1px solid #9aa5a6; border-width: 1px 0 1px 2px; margin-left: 1px; padding: 5px 10px 0 5px; font-family: "Liberation Sans", sans-serif; color: #6c7678; }
.selection { width: 180px; }
.proptools { display: flex; gap: 3px; margin: 2px 0 3px; }
.proptools button { width: 14px; height: 14px; border: 1px solid #cfd7d7; background: #f8fafa; }
.proptools svg { width: 10px; height: 10px; }
.proptools .q { color: #111; font-weight: 700; font-size: 8px; }
.sect { border: solid #e6ebeb; border-width: 0 1px 1px; margin-bottom: 1px; }
.sect h3 { margin: 0 -1px 6px; height: 10px; background: #e6eaff; border: 1px solid #b4c6da; padding: 0 3px; font: 600 7px/8px "Open Sans", sans-serif; color: #6e7c8c; display: flex; align-items: center; justify-content: space-between; }
.sect h3 i, .up { width: 0; height: 0; border: 3px solid transparent; border-bottom: 3px solid #8f9a9b; border-top: 0; }
.field { display: grid; grid-template-columns: 10px 1fr 78px; column-gap: 5px; align-items: center; height: 12px; padding-left: 4px; }
.tall .field { height: 13px; }
.field > svg { width: 10px; height: 10px; }
.field > input { width: 78px; height: 11px; border: 1px solid #a9c9de; background: #b3e0ff; padding: 0 1px; color: #14252e; }
.tall .field > input { height: 12px; }
.field .pick { padding-left: 1px; }
.rail.right { border-top: 1px solid #8c9798; }
.dock { width: 12px; display: flex; flex-direction: column; align-items: flex-start; }
.dock .vtext { width: 11px; border: 1px solid #c2cbcb; border-bottom-width: 0; padding: 5px 0 4px; background: #eef1f1; flex: none; }
.dock .first { background: #fdfefe; }

.command { background: #fff; font-family: Inter, "Liberation Sans", sans-serif; }
.command header { display: flex; align-items: center; gap: 4px; height: 12px; background: #bcc6c6; border: 1px solid #8c9798; border-width: 1px 0; padding: 0 2px; font: 6px/10px "Open Sans", sans-serif; color: #14191a; }
.command header strong { margin-right: auto; }
.command header svg { width: 7px; height: 7px; }
.history { display: flex; height: 15px; border-bottom: 1px solid #d2dada; padding-right: 2px; }
.log { flex: 1; display: flex; flex-direction: column; justify-content: flex-end; overflow: hidden; padding: 0 0 2px 2px; line-height: 7px; }
.scroll { display: flex; flex-direction: column; justify-content: space-between; padding: 3px 0 2px; }
.up { border-bottom-color: #111; }
.prompt { padding: 1px 2px; line-height: 7px; height: 23px; }
.prompt p { height: 7px; }
.prompt .def { color: #f08c1e; font-weight: 400; }
.status { display: flex; align-items: center; height: 15px; padding: 1px 1px 0; }
.product { width: 336px; font-family: "Liberation Sans", sans-serif; }
.filter { width: 8px; height: 8px; margin-right: 5px; }
.toggles { display: flex; gap: 4px; }
.status button { height: 12px; border: 1px solid #c5cdcd; }
.toggles button { width: 13px; }
.toggles svg { width: 9px; height: 9px; }
.status .on { background: #d9efff; border-color: #9ccdee; }
.status .dyn { padding: 0 2px; margin: 0 3px 0 2px; }
.status .add { width: 13px; font-size: 11px; margin-right: 3px; }
.anno { position: relative; width: 48px; height: 12px; border: 1px solid #c5cdcd; display: flex; align-items: center; padding-left: 1px; margin-right: 3px; }
.anno select { width: 100%; }
.anno::after { content: ""; position: absolute; right: 3px; top: 4px; border: 3px solid transparent; border-top: 4px solid #111; border-bottom: 0; }
.coords { font-family: "Liberation Sans", sans-serif; }
</style>
